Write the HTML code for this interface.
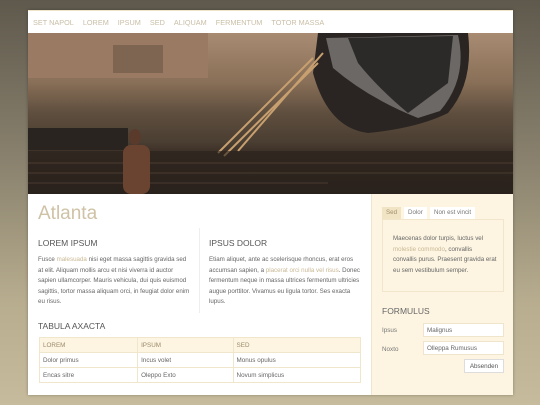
<!DOCTYPE html>
<html><head><style>
*{margin:0;padding:0;box-sizing:border-box}
body{width:540px;height:405px;overflow:hidden;background:linear-gradient(#5f594d 0%,#8a826e 40%,#b8ad8f 75%,#c6bb9c 100%);font-family:"Liberation Sans",sans-serif;position:relative}
#wrap{position:absolute;left:28px;top:10px;width:485px;height:385px;background:#fff;box-shadow:0 0 3px rgba(0,0,0,.3)}
#nav{height:23px;background:#fff;font-size:7.3px;color:#c9bea6;padding:7px 0 0 5px;border-top:1px solid #efe4c8;white-space:nowrap}
#nav span{margin-right:9px}
#img{position:absolute;top:23px;left:0;width:485px;height:161px;overflow:hidden}
#main{position:absolute;top:184px;left:0;width:343px;height:201px;background:#fff}
#side{position:absolute;top:184px;left:343px;width:142px;height:201px;background:#fdf5e2;border-left:1px solid #efe6d0}
h1{position:absolute;left:10px;top:9px;font-size:19px;font-weight:normal;color:#cfc2a6}
h2{position:absolute;font-size:8.5px;font-weight:normal;color:#555}
p{position:absolute;font-size:6.2px;line-height:10.5px;color:#666}
a{color:#c9b894}
table{position:absolute;left:11px;top:143px;width:322px;border-collapse:collapse;font-size:6.3px;color:#666}
td{border:1px solid #f0e6cc;height:15px;padding-left:3px}
tr:first-child td{background:#fdf5e2;color:#9a8a6a}
.tab{position:absolute;top:13px;height:12px;font-size:6.2px;color:#777;background:#fff;padding:2px 4px 0}
.box{position:absolute;left:10px;top:25px;width:122px;height:73px;border:1px solid #f1e6cc;background:#fdf5e2}
.lab{position:absolute;font-size:6.3px;color:#777;left:10px}
.inp{position:absolute;left:51px;width:81px;height:14px;background:#fff;border:1px solid #efe5cc;font-size:6.3px;color:#666;padding:3px 0 0 3px}
</style></head><body>
<div id="wrap">
<div id="nav"><span>SET NAPOL</span><span>LOREM</span><span>IPSUM</span><span>SED</span><span>ALIQUAM</span><span>FERMENTUM</span><span>TOTOR MASSA</span></div>
<div id="img">
<svg width="485" height="161" viewBox="0 0 485 161">
<defs>
<linearGradient id="g" x1="0" y1="0" x2="0" y2="1">
<stop offset="0" stop-color="#a88b72"/><stop offset=".3" stop-color="#8a7058"/><stop offset=".5" stop-color="#5e4e3e"/><stop offset=".68" stop-color="#4a3e32"/><stop offset=".75" stop-color="#3a2e26"/><stop offset="1" stop-color="#2a221c"/>
</linearGradient>
</defs>
<rect width="485" height="161" fill="url(#g)"/>
<rect x="0" y="0" width="180" height="45" fill="#9a7a62"/>
<rect x="85" y="12" width="50" height="28" fill="#7e6552"/>
<rect x="0" y="95" width="100" height="22" fill="#2a2420"/>
<path d="M290 0 L440 0 Q446 50 420 80 Q390 95 340 100 Q300 95 285 40 Z" fill="#2a2522"/>
<path d="M298 5 L430 2 Q440 45 412 78 L390 85 Q340 65 305 35 Z" fill="#6b6866"/>
<path d="M320 5 L425 3 L420 50 L380 80 Q350 55 330 30 Z" fill="#2c2a28"/>
<path d="M190 120 L285 25 M196 123 L290 30 M210 118 L295 20" stroke="#c8a070" stroke-width="2"/>
<rect x="0" y="118" width="485" height="43" fill="#2a221c" opacity=".6"/>
<path d="M0 130 L485 130 M0 140 L485 140 M0 150 L300 150" stroke="#6a5440" stroke-width="1" opacity=".5"/>
<ellipse cx="107" cy="104" rx="6" ry="8" fill="#5a3a2a"/>
<rect x="95" y="112" width="27" height="49" rx="8" fill="#6a4430"/>
</svg>
</div>
<div id="main">
<h1>Atlanta</h1>
<h2 style="left:10px;top:44px">LOREM IPSUM</h2>
<p style="left:10px;top:61px;width:155px">Fusce <a>malesuada</a> nisi eget massa sagittis gravida sed at elit. Aliquam mollis arcu et nisi viverra id auctor sapien ullamcorper. Mauris vehicula, dui quis euismod sagittis, tortor massa aliquam orci, in feugiat dolor enim eu risus.</p>
<div style="position:absolute;left:171px;top:34px;width:1px;height:85px;background:#eee"></div>
<h2 style="left:181px;top:44px">IPSUS DOLOR</h2>
<p style="left:181px;top:61px;width:153px">Etiam aliquet, ante ac scelerisque rhoncus, erat eros accumsan sapien, a <a>placerat orci nulla vel risus</a>. Donec fermentum neque in massa ultrices fermentum ultricies augue porttitor. Vivamus eu ligula tortor. Ses exacta lupus.</p>
<h2 style="left:10px;top:127px">TABULA AXACTA</h2>
<table><tr><td>LOREM</td><td>IPSUM</td><td>SED</td></tr><tr><td>Dolor primus</td><td>Incus volet</td><td>Monus opulus</td></tr><tr><td>Encas sitre</td><td>Oleppo Exto</td><td>Novum simplicus</td></tr></table>
</div>
<div id="side">
<div class="tab" style="left:10px;background:#f1e4c4;color:#a08e6c">Sed</div>
<div class="tab" style="left:32px">Dolor</div>
<div class="tab" style="left:58px">Non est vincit</div>
<div class="box"><p style="left:10px;top:14px;width:104px">Maecenas dolor turpis, luctus vel <a>molestie commodo</a>, convallis convallis purus. Praesent gravida erat eu sem vestibulum semper.</p></div>
<h2 style="left:10px;top:112px;color:#666">FORMULUS</h2>
<div class="lab" style="top:133px">Ipsus</div><div class="inp" style="top:129px">Malignus</div>
<div class="lab" style="top:152px">Noxto</div><div class="inp" style="top:147px">Olleppa Rumusus</div>
<div style="position:absolute;left:92px;top:165px;width:40px;height:14px;background:#fff;border:1px solid #ddd;font-size:6.3px;color:#555;text-align:center;padding-top:3px">Absenden</div>
</div>
</div>
</body></html>
